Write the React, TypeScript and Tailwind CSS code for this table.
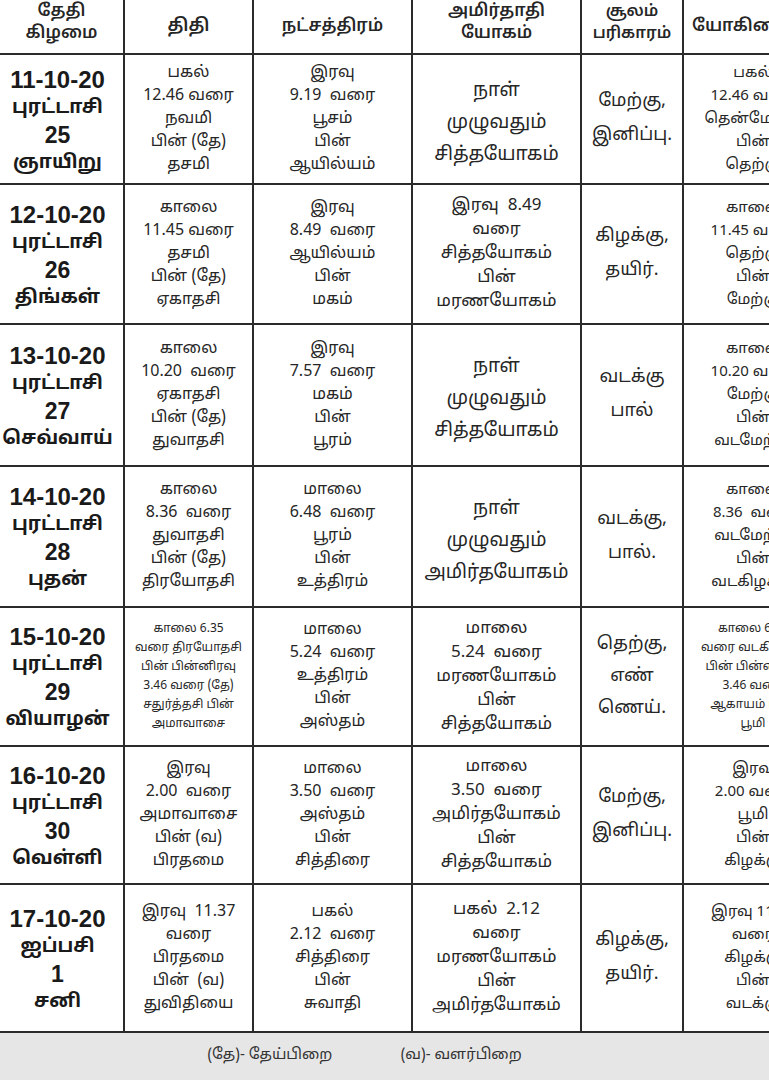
import React from "react";

type Row = {
  h: string;
  date: string[];
  tithi: string[];
  tithiSmall?: boolean;
  nakshatra: string[];
  yogam: string[];
  soolam: string[];
  yogini: string[];
  yoginiSmall?: boolean;
};

const rows: Row[] = [
  {
    h: "h-[130px]",
    date: ["11-10-20", "புரட்டாசி", "25", "ஞாயிறு"],
    tithi: ["பகல்", "12.46 வரை", "நவமி", "பின் (தே)", "தசமி"],
    nakshatra: ["இரவு", "9.19  வரை", "பூசம்", "பின்", "ஆயில்யம்"],
    yogam: ["நாள்", "முழுவதும்", "சித்தயோகம்"],
    soolam: ["மேற்கு,", "இனிப்பு."],
    yogini: ["பகல்", "12.46 வரை", "தென்மேற்கு", "பின்", "தெற்கு"],
  },
  {
    h: "h-[140px]",
    date: ["12-10-20", "புரட்டாசி", "26", "திங்கள்"],
    tithi: ["காலை", "11.45 வரை", "தசமி", "பின் (தே)", "ஏகாதசி"],
    nakshatra: ["இரவு", "8.49  வரை", "ஆயில்யம்", "பின்", "மகம்"],
    yogam: ["இரவு  8.49", "வரை", "சித்தயோகம்", "பின்", "மரணயோகம்"],
    soolam: ["கிழக்கு,", "தயிர்."],
    yogini: ["காலை", "11.45 வரை", "தெற்கு", "பின்", "மேற்கு"],
  },
  {
    h: "h-[142px]",
    date: ["13-10-20", "புரட்டாசி", "27", "செவ்வாய்"],
    tithi: ["காலை", "10.20  வரை", "ஏகாதசி", "பின் (தே)", "துவாதசி"],
    nakshatra: ["இரவு", "7.57  வரை", "மகம்", "பின்", "பூரம்"],
    yogam: ["நாள்", "முழுவதும்", "சித்தயோகம்"],
    soolam: ["வடக்கு", "பால்"],
    yogini: ["காலை", "10.20 வரை", "மேற்கு", "பின்", "வடமேற்கு"],
  },
  {
    h: "h-[141px]",
    date: ["14-10-20", "புரட்டாசி", "28", "புதன்"],
    tithi: ["காலை", "8.36  வரை", "துவாதசி", "பின் (தே)", "திரயோதசி"],
    nakshatra: ["மாலை", "6.48  வரை", "பூரம்", "பின்", "உத்திரம்"],
    yogam: ["நாள்", "முழுவதும்", "அமிர்தயோகம்"],
    soolam: ["வடக்கு,", "பால்."],
    yogini: ["காலை", "8.36  வரை", "வடமேற்கு", "பின்", "வடகிழக்கு"],
  },
  {
    h: "h-[139px]",
    date: ["15-10-20", "புரட்டாசி", "29", "வியாழன்"],
    tithi: ["காலை 6.35", "வரை திரயோதசி", "பின் பின்னிரவு", "3.46 வரை (தே)", "சதுர்த்தசி பின்", "அமாவாசை"],
    tithiSmall: true,
    nakshatra: ["மாலை", "5.24  வரை", "உத்திரம்", "பின்", "அஸ்தம்"],
    yogam: ["மாலை", "5.24  வரை", "மரணயோகம்", "பின்", "சித்தயோகம்"],
    soolam: ["தெற்கு,", "எண்", "ணெய்."],
    yogini: ["காலை 6.35", "வரை வடகிழக்கு", "பின் பின்னிரவு", "3.46 வரை", "ஆகாயம் பின்", "பூமி"],
    yoginiSmall: true,
  },
  {
    h: "h-[138px]",
    date: ["16-10-20", "புரட்டாசி", "30", "வெள்ளி"],
    tithi: ["இரவு", "2.00  வரை", "அமாவாசை", "பின் (வ)", "பிரதமை"],
    nakshatra: ["மாலை", "3.50  வரை", "அஸ்தம்", "பின்", "சித்திரை"],
    yogam: ["மாலை", "3.50  வரை", "அமிர்தயோகம்", "பின்", "சித்தயோகம்"],
    soolam: ["மேற்கு,", "இனிப்பு."],
    yogini: ["இரவு", "2.00 வரை", "பூமி", "பின்", "கிழக்கு"],
  },
  {
    h: "h-[148px]",
    date: ["17-10-20", "ஐப்பசி", "1", "சனி"],
    tithi: ["இரவு  11.37", "வரை", "பிரதமை", "பின்  (வ)", "துவிதியை"],
    nakshatra: ["பகல்", "2.12  வரை", "சித்திரை", "பின்", "சுவாதி"],
    yogam: ["பகல்  2.12", "வரை", "மரணயோகம்", "பின்", "அமிர்தயோகம்"],
    soolam: ["கிழக்கு,", "தயிர்."],
    yogini: ["இரவு 11.37", "வரை", "கிழக்கு", "பின்", "வடக்கு"],
  },
];

const font = {
  fontFamily: '"Noto Sans Tamil", "Lohit Tamil", "Noto Sans", "Liberation Sans", sans-serif',
};

function Lines({ lines, cls }: { lines: string[]; cls: string }) {
  return (
    <div className={cls}>
      {lines.map((l, i) => (
        <div key={i} className="whitespace-pre">
          {l}
        </div>
      ))}
    </div>
  );
}

const cell = "flex items-center justify-center text-center border-r-[2.5px] border-b-[2.5px] border-[#2b2b2b] overflow-hidden";

export default function App() {
  return (
    <div className="w-[769px] h-[1080px] overflow-hidden bg-white text-[#262626]" style={font}>
      <div className="grid grid-cols-[125px_129px_159px_169px_102px_140px] w-[824px]">
        {/* header */}
        <div className={`${cell} h-[55px]`}>
          <Lines lines={["தேதி", "கிழமை"]} cls="text-[17px] leading-[22px] font-semibold -mt-2" />
        </div>
        <div className={`${cell} h-[55px]`}>
          <Lines lines={["திதி"]} cls="text-[18px] font-semibold" />
        </div>
        <div className={`${cell} h-[55px]`}>
          <Lines lines={["நட்சத்திரம்"]} cls="text-[17px] font-semibold" />
        </div>
        <div className={`${cell} h-[55px]`}>
          <Lines lines={["அமிர்தாதி", "யோகம்"]} cls="text-[17px] leading-[22px] font-semibold -mt-2" />
        </div>
        <div className={`${cell} h-[55px]`}>
          <Lines lines={["சூலம்", "பரிகாரம்"]} cls="text-[16px] leading-[22px] font-semibold -mt-2" />
        </div>
        <div className={`${cell} h-[55px] justify-start pl-2`}>
          <Lines lines={["யோகினி"]} cls="text-[17px] font-semibold" />
        </div>

        {rows.map((r, i) => (
          <React.Fragment key={i}>
            <div className={`${cell} ${r.h}`}>
              <div className="font-bold text-[#1a1a1a] mt-1 pr-2">
                <div className="text-[24px] leading-[28px]" style={{ fontFamily: '"Liberation Sans", sans-serif' }}>
                  {r.date[0]}
                </div>
                <div className="text-[19px] leading-[28px]">{r.date[1]}</div>
                <div className="text-[23px] leading-[27px]" style={{ fontFamily: '"Liberation Sans", sans-serif' }}>
                  {r.date[2]}
                </div>
                <div className="text-[19px] leading-[28px]">{r.date[3]}</div>
              </div>
            </div>
            <div className={`${cell} ${r.h}`}>
              <Lines
                lines={r.tithi}
                cls={r.tithiSmall ? "text-[12px] leading-[19px]" : "text-[16px] leading-[23px]"}
              />
            </div>
            <div className={`${cell} ${r.h}`}>
              <Lines lines={r.nakshatra} cls="text-[16px] leading-[23px]" />
            </div>
            <div className={`${cell} ${r.h}`}>
              <Lines
                lines={r.yogam}
                cls={r.yogam.length === 3 ? "text-[19px] leading-[32px] mt-2" : "text-[17px] leading-[24px]"}
              />
            </div>
            <div className={`${cell} ${r.h}`}>
              <Lines
                lines={r.soolam}
                cls={r.soolam.length === 3 ? "text-[18px] leading-[32px]" : "text-[18px] leading-[34px]"}
              />
            </div>
            <div className={`${cell} ${r.h}`}>
              <Lines
                lines={r.yogini}
                cls={r.yoginiSmall ? "text-[12px] leading-[19px]" : "text-[15px] leading-[23px]"}
              />
            </div>
          </React.Fragment>
        ))}
      </div>
      <div className="h-[47px] bg-[#e6e6e6] flex items-center justify-center text-[15px] text-[#333] gap-[68px] pr-[40px]">
        <span>(தே)- தேய்பிறை</span>
        <span>(வ)- வளர்பிறை</span>
      </div>
    </div>
  );
}
